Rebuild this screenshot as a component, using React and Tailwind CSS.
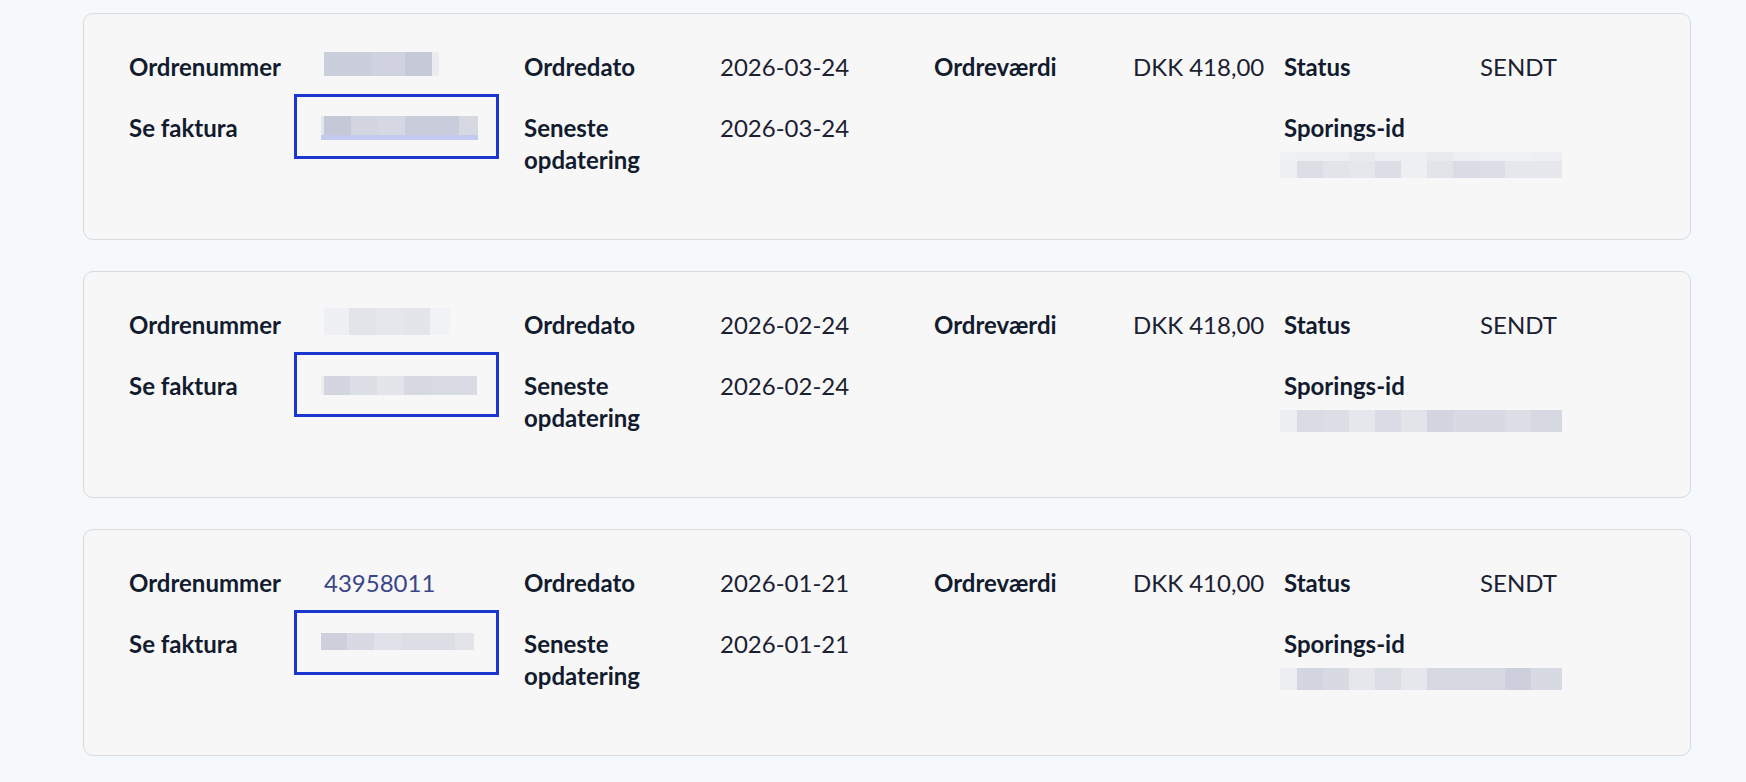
const orders = [
  {
    number: null,
    numberBlur: { h: 24, top: 0, blocks: [[23, '#cbcedb'], [25, '#cbcedb'], [33, '#d0d3df'], [27, '#c6cad8'], [7, '#ebecf0']] },
    date: '2026-03-24',
    value: 'DKK 418,00',
    invoice: { top: 1, h: 19, underline: true, blocks: [[3, '#e4e6ee'], [27, '#c5c8d6'], [27, '#d3d5e0'], [27, '#d5d7e2'], [54, '#c9ccda'], [19, '#d6d8e2']] },
    tracking: { top: ['#f0f1f4', '#eeeff2', '#eeeff2', '#e9eaee', '#eeeff2', '#eeeff2', '#e9eaee', '#eeeff2', '#f0f1f4', '#f0f1f4', '#eeeff2'], bottom: ['#eeeff2', '#dcdee6', '#e2e4ea', '#e6e7ec', '#dcdee6', '#eeeff2', '#e2e4ea', '#d9dce5', '#dcdee6', '#e6e7ec', '#e6e7ec'] },
  },
  {
    number: null,
    numberBlur: { h: 27, top: -2, blocks: [[25, '#eef0f3'], [27, '#e2e4ea'], [27, '#e6e7ed'], [27, '#e3e5eb'], [20, '#f1f2f5']] },
    date: '2026-02-24',
    value: 'DKK 418,00',
    invoice: { top: 3, h: 19, underline: false, blocks: [[3, '#eceef2'], [26, '#d3d6e0'], [27, '#dcdee6'], [27, '#e3e5eb'], [27, '#d6d8e2'], [46, '#d9dbe4']] },
    tracking: { top: ['#eceef2', '#dadce5', '#dcdee6', '#e6e7ec', '#dadce5', '#e2e4ea', '#d3d6e0', '#d8dae3', '#d8dae3', '#dcdee6', '#d6d8e2'], bottom: null },
  },
  {
    number: '43958011',
    date: '2026-01-21',
    value: 'DKK 410,00',
    invoice: { top: 2, h: 17, underline: false, blocks: [[26, '#cdd0dc'], [27, '#d8dae3'], [27, '#e0e2e9'], [27, '#dcdee6'], [27, '#dcdee6'], [19, '#e2e4ea']] },
    tracking: { top: ['#eceef2', '#d3d6e0', '#d8dae3', '#e6e7ec', '#dcdee6', '#e6e7ec', '#d6d8e2', '#d6d8e2', '#d6d8e2', '#cdd0dc', '#d8dae3'], bottom: null },
  },
];

function Blocks({ blocks, h }) {
  return (
    <div className="flex" style={{ height: h }}>
      {blocks.map(([w, c], i) => (
        <div key={i} style={{ width: w, backgroundColor: c }} />
      ))}
    </div>
  );
}

function TrackingBlur({ tracking }) {
  const widths = [17, 26, 26, 26, 26, 26, 26, 26, 26, 26, 31];
  const rows = tracking.bottom ? [[tracking.top, 9], [tracking.bottom, 17]] : [[tracking.top, 22]];
  return (
    <div className="mt-[8px] -ml-[4px] flex flex-col">
      {rows.map(([colors, h], r) => (
        <Blocks key={r} h={h} blocks={widths.map((w, i) => [w, colors[i]])} />
      ))}
    </div>
  );
}

function Label({ children }) {
  return <div className="font-bold text-[#131b2e]">{children}</div>;
}

function Value({ children }) {
  return <div className="text-[#1b2131]">{children}</div>;
}

function OrderCard({ order }) {
  return (
    <div className="w-[1608px] h-[227px] shrink-0 rounded-[10px] border border-[#d8dadd] bg-[#f7f7f7] pl-[45px] pt-[37px]">
      <div className="grid grid-cols-[195px_200px_196px_214px_199px_151px_196px_1fr] gap-y-[29px] text-[24px] leading-[32px]">
        <Label>Ordrenummer</Label>
        {order.number ? (
          <a href="#" className="text-[#3b4687]">{order.number}</a>
        ) : (
          <div style={{ marginTop: order.numberBlur.top + 1 }}>
            <Blocks h={order.numberBlur.h} blocks={order.numberBlur.blocks} />
          </div>
        )}
        <Label>Ordredato</Label>
        <Value>{order.date}</Value>
        <Label>Ordreværdi</Label>
        <Value>{order.value}</Value>
        <Label>Status</Label>
        <Value>SENDT</Value>

        <Label>Se faktura</Label>
        <div>
          <a
            href="#"
            className="-ml-[30px] -mt-[18px] block h-[65px] w-[205px] border-[3px] border-[#1c36d0] pl-[24px]"
            style={{ paddingTop: 18 + order.invoice.top }}
          >
            <Blocks h={order.invoice.h} blocks={order.invoice.blocks} />
            {order.invoice.underline && <div className="h-[5px] w-[157px] bg-[#c3caf0]" />}
          </a>
        </div>
        <Label>
          Seneste
          <br />
          opdatering
        </Label>
        <Value>{order.date}</Value>
        <div />
        <div />
        <div className="col-span-2">
          <Label>Sporings-id</Label>
          <TrackingBlur tracking={order.tracking} />
        </div>
      </div>
    </div>
  );
}

export default function App() {
  return (
    <div
      className="min-h-screen bg-[#f5f9fc] pl-[83px] pt-[13px] flex flex-col gap-[31px]"
      style={{ fontFamily: 'Lato, "Noto Sans", sans-serif' }}
    >
      {orders.map((o, i) => (
        <OrderCard key={i} order={o} />
      ))}
    </div>
  );
}
